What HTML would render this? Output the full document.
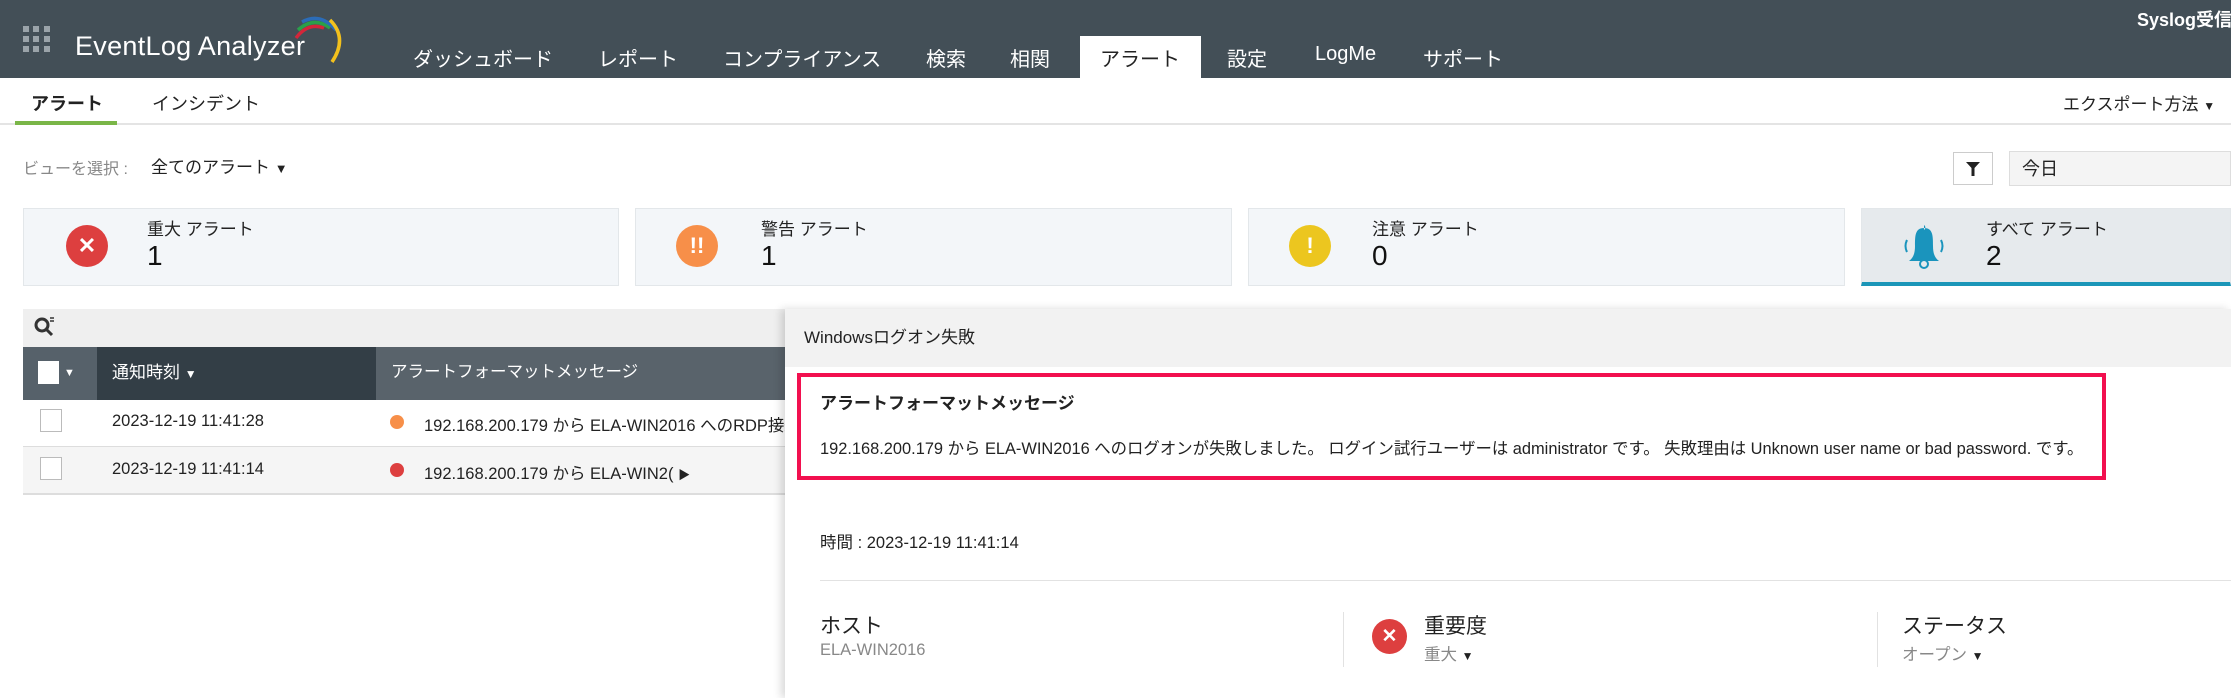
<!DOCTYPE html>
<html><head><meta charset="utf-8">
<style>
*{margin:0;padding:0;box-sizing:border-box}
body{width:2231px;height:698px;overflow:hidden;background:#fff;font-family:"Liberation Sans","Noto Sans CJK JP",sans-serif;color:#222;position:relative}
.a{position:absolute;white-space:nowrap}
.hdr{left:0;top:0;width:2231px;height:78px;background:#434f57}
.nav{top:43px;color:#fff;font-size:20px}
.card{top:208px;height:78px;background:#f3f6f9;border:1px solid #e3e7ea}
.ic{width:42px;height:42px;border-radius:50%;color:#fff;text-align:center;font-weight:bold;font-size:22px;line-height:42px}
.lbl{font-size:17px;color:#222}
.num{font-size:28px;color:#111}
.cb{width:22px;height:23px;background:#fff;border:1px solid #bbb}
</style></head><body>
<div class="a hdr"></div>
<svg class="a" style="left:23px;top:26px" width="28" height="27"><g fill="#9aa3a9">
<rect x="0" y="0" width="6" height="6"/><rect x="10" y="0" width="6" height="6"/><rect x="21" y="0" width="6" height="6"/>
<rect x="0" y="10" width="6" height="6"/><rect x="10" y="10" width="6" height="6"/><rect x="21" y="10" width="6" height="6"/>
<rect x="0" y="20" width="6" height="6"/><rect x="10" y="20" width="6" height="6"/><rect x="21" y="20" width="6" height="6"/></g></svg>
<div class="a" style="left:75px;top:31px;color:#fff;font-size:27px;letter-spacing:0.3px">EventLog Analyzer</div>
<svg class="a" style="left:290px;top:14px" width="58" height="52" fill="none" stroke-width="3.5">
<path d="M6 24 Q18 8 34 14" stroke="#d3263a"/>
<path d="M8 16 Q24 2 40 14" stroke="#2aa04a"/>
<path d="M12 8 Q30 -2 46 16" stroke="#2b6cb8"/>
<path d="M40 6 Q58 24 42 48" stroke="#f3c11d"/>
</svg>
<div class="a" style="left:2137px;top:6px;color:#fff;font-size:18px;font-weight:bold">Syslog受信</div>
<div class="a" style="left:1080px;top:36px;width:121px;height:42px;background:#fff"></div>
<div class="a nav" style="left:413px">ダッシュボード</div>
<div class="a nav" style="left:598px">レポート</div>
<div class="a nav" style="left:723px">コンプライアンス</div>
<div class="a nav" style="left:926px">検索</div>
<div class="a nav" style="left:1010px">相関</div>
<div class="a nav" style="left:1100px;color:#222">アラート</div>
<div class="a nav" style="left:1227px">設定</div>
<div class="a nav" style="left:1315px">LogMe</div>
<div class="a nav" style="left:1423px">サポート</div>

<div class="a" style="left:0;top:123px;width:2231px;height:2px;background:#e4e4e4"></div>
<div class="a" style="left:15px;top:121px;width:102px;height:4px;background:#7ab648"></div>
<div class="a" style="left:31px;top:90px;font-size:18px;font-weight:bold">アラート</div>
<div class="a" style="left:152px;top:90px;font-size:18px">インシデント</div>
<div class="a" style="left:2063px;top:90px;font-size:17px">エクスポート方法 <span style="font-size:12px">▼</span></div>

<div class="a" style="left:23px;top:155px;font-size:16px;color:#888">ビューを選択 :</div>
<div class="a" style="left:151px;top:153px;font-size:17px">全てのアラート <span style="font-size:13px">▼</span></div>
<div class="a" style="left:1953px;top:152px;width:40px;height:33px;border:1px solid #ccc;background:#fff"></div>
<svg class="a" style="left:1965px;top:161px" width="16" height="16"><path d="M1 1 H15 L9.5 7 V15 H6.5 V7 Z" fill="#222"/></svg>
<div class="a" style="left:2009px;top:151px;width:222px;height:35px;background:#f4f4f4;border:1px solid #ddd"></div>
<div class="a" style="left:2022px;top:155px;font-size:18px">今日</div>

<div class="a card" style="left:23px;width:596px"></div>
<div class="a card" style="left:635px;width:597px"></div>
<div class="a card" style="left:1248px;width:597px"></div>
<div class="a card" style="left:1861px;width:370px;background:#e6eaed;border-bottom:4px solid #1b96b8"></div>
<div class="a ic" style="left:66px;top:225px;background:#dd3f3f">✕</div>
<div class="a ic" style="left:676px;top:225px;background:#f78f49">!!</div>
<div class="a ic" style="left:1289px;top:225px;background:#ecc61f">!</div>
<svg class="a" style="left:1902px;top:222px" width="44" height="48">
<path d="M22 3 a3 3 0 0 1 0 5 M22 6 C13 6 13 14 13 24 C13 32 11 36 7 39 H37 C33 36 31 32 31 24 C31 14 31 6 22 6Z" fill="#1a94bd"/>
<circle cx="22" cy="42" r="4" fill="none" stroke="#1a94bd" stroke-width="2"/>
<path d="M5 18 Q2 24 5 30 M39 18 Q42 24 39 30" stroke="#1a94bd" stroke-width="2" fill="none"/></svg>
<div class="a lbl" style="left:147px;top:215px">重大 アラート</div>
<div class="a num" style="left:147px;top:240px">1</div>
<div class="a lbl" style="left:761px;top:215px">警告 アラート</div>
<div class="a num" style="left:761px;top:240px">1</div>
<div class="a lbl" style="left:1372px;top:215px">注意 アラート</div>
<div class="a num" style="left:1372px;top:240px">0</div>
<div class="a lbl" style="left:1986px;top:215px">すべて アラート</div>
<div class="a num" style="left:1986px;top:240px">2</div>

<div class="a" style="left:23px;top:309px;width:762px;height:38px;background:#efefef"></div>
<svg class="a" style="left:33px;top:316px" width="22" height="22"><circle cx="9" cy="9" r="6" stroke="#333" stroke-width="3" fill="none"/><path d="M13 13 L19 19" stroke="#333" stroke-width="3"/><path d="M17 2h4M17 5h4" stroke="#333" stroke-width="1.5"/></svg>
<div class="a" style="left:23px;top:347px;width:74px;height:53px;background:#56616a"></div>
<div class="a" style="left:97px;top:347px;width:279px;height:53px;background:#333e46"></div>
<div class="a" style="left:376px;top:347px;width:409px;height:53px;background:#59636b"></div>
<div class="a" style="left:38px;top:361px;width:21px;height:23px;background:#fff"></div>
<div class="a" style="left:64px;top:367px;color:#fff;font-size:11px">▼</div>
<div class="a" style="left:112px;top:358px;color:#fff;font-size:17px">通知時刻 <span style="font-size:12px">▼</span></div>
<div class="a" style="left:391px;top:358px;color:#fff;font-size:16.5px">アラートフォーマットメッセージ</div>
<div class="a" style="left:23px;top:400px;width:762px;height:47px;background:#fff;border-bottom:1px solid #ddd"></div>
<div class="a" style="left:23px;top:447px;width:762px;height:48px;background:#f5f5f5;border-bottom:2px solid #ddd"></div>
<div class="a cb" style="left:40px;top:409px"></div>
<div class="a cb" style="left:40px;top:457px"></div>
<div class="a" style="left:112px;top:412px;font-size:16.5px">2023-12-19 11:41:28</div>
<div class="a" style="left:112px;top:460px;font-size:16.5px">2023-12-19 11:41:14</div>
<div class="a" style="left:390px;top:415px;width:14px;height:14px;border-radius:50%;background:#f78f49"></div>
<div class="a" style="left:390px;top:463px;width:14px;height:14px;border-radius:50%;background:#dd3f3f"></div>
<div class="a" style="left:424px;top:412px;font-size:16.5px;width:361px;overflow:hidden">192.168.200.179 から ELA-WIN2016 へのRDP接続</div>
<div class="a" style="left:424px;top:460px;font-size:16.5px">192.168.200.179 から ELA-WIN2( <span style="font-size:12px">▶</span></div>

<div class="a" style="left:785px;top:309px;width:1446px;height:389px;background:#fff;box-shadow:-4px 0 8px rgba(0,0,0,0.15)"></div>
<div class="a" style="left:785px;top:309px;width:1446px;height:58px;background:#f2f2f2"></div>
<div class="a" style="left:804px;top:323px;font-size:17px">Windowsログオン失敗</div>
<div class="a" style="left:797px;top:373px;width:1309px;height:107px;border:4px solid #f2104f"></div>
<div class="a" style="left:820px;top:389px;font-size:17px;font-weight:bold">アラートフォーマットメッセージ</div>
<div class="a" style="left:820px;top:435px;font-size:16.4px">192.168.200.179 から ELA-WIN2016 へのログオンが失敗しました。 ログイン試行ユーザーは administrator です。 失敗理由は Unknown user name or bad password. です。</div>
<div class="a" style="left:820px;top:529px;font-size:16.5px">時間 : 2023-12-19 11:41:14</div>
<div class="a" style="left:820px;top:580px;width:1411px;height:1px;background:#e2e2e2"></div>
<div class="a" style="left:820px;top:610px;font-size:21px">ホスト</div>
<div class="a" style="left:820px;top:641px;font-size:16.5px;color:#888">ELA-WIN2016</div>
<div class="a" style="left:1343px;top:612px;width:1px;height:55px;background:#e2e2e2"></div>
<div class="a ic" style="left:1372px;top:619px;width:35px;height:35px;line-height:35px;font-size:19px;background:#dd3f3f">✕</div>
<div class="a" style="left:1424px;top:610px;font-size:21px">重要度</div>
<div class="a" style="left:1424px;top:641px;font-size:16.5px;color:#888">重大 <span style="font-size:12px;color:#222">▼</span></div>
<div class="a" style="left:1877px;top:612px;width:1px;height:55px;background:#e2e2e2"></div>
<div class="a" style="left:1902px;top:610px;font-size:21px">ステータス</div>
<div class="a" style="left:1902px;top:641px;font-size:16.5px;color:#888">オープン <span style="font-size:12px;color:#222">▼</span></div>
</body></html>
